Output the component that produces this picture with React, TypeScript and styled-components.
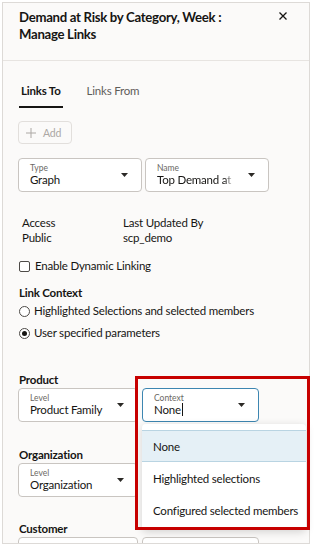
import React from "react";
import styled, { createGlobalStyle, css } from "styled-components";

const GlobalStyle = createGlobalStyle`
  *, *::before, *::after { box-sizing: border-box; }
  html, body { margin: 0; padding: 0; background: #ffffff; }
  body {
    font-family: Lato, "Liberation Sans", Arial, sans-serif;
    color: #161513;
    letter-spacing: -0.2px;
    overflow: hidden;
  }
  button { font-family: inherit; letter-spacing: inherit; }
`;

const Panel = styled.section`
  position: relative;
  margin: 2px 0 0 2px;
  width: 308px;
  height: 542px;
  border: 1px solid #dddad7;
  background: #fbfaf9;
  overflow-x: visible;
  overflow-y: clip;
`;

const Header = styled.header`
  display: flex;
  align-items: flex-start;
  gap: 12px;
  padding: 6px 18px 17px 16px;
  border-bottom: 1px solid #e7e4e1;
`;

const Title = styled.h1`
  flex: 1;
  margin: 0;
  font-size: 13.2px;
  line-height: 17px;
  font-weight: 700;
  letter-spacing: -0.3px;
  color: #161513;
`;

const CloseButton = styled.button`
  flex: none;
  width: 16px;
  height: 16px;
  margin-top: -1px;
  padding: 0;
  border: 0;
  background: none;
  display: flex;
  align-items: center;
  justify-content: center;
  color: #161513;
`;

const Content = styled.div`
  padding: 22px 15px 0;
`;

const TabList = styled.div`
  display: flex;
  gap: 22px;
  margin-left: 1px;
`;

const Tab = styled.button<{ $active?: boolean }>`
  padding: 0 2px 7px;
  border: 0;
  border-bottom: 2px solid ${(p) => (p.$active ? "#161513" : "transparent")};
  background: none;
  font-size: 11.5px;
  line-height: 16px;
  font-weight: ${(p) => (p.$active ? 700 : 400)};
  color: ${(p) => (p.$active ? "#161513" : "#5f5c59")};
`;

const AddButton = styled.button`
  margin-top: 13px;
  height: 23px;
  width: fit-content;
  display: flex;
  align-items: center;
  gap: 7px;
  padding: 0 10px 0 7px;
  border: 1px solid #e2dfdc;
  border-radius: 4px;
  background: transparent;
  color: #aca8a4;
  font-size: 10.5px;
`;

const FieldRow = styled.div<{ $gap: number; $top?: number }>`
  display: flex;
  gap: ${(p) => p.$gap}px;
  margin-top: ${(p) => p.$top ?? 0}px;
`;

const SelectBox = styled.div<{ $width: number; $focused?: boolean }>`
  position: relative;
  flex: none;
  width: ${(p) => p.$width}px;
  height: 34px;
  display: flex;
  align-items: flex-start;
  padding: 4px 13px 0 11px;
  border: 1px solid ${(p) => (p.$focused ? "#3d86b1" : "#c9c5c1")};
  border-radius: 4px;
  background: #ffffff;
`;

const SelectText = styled.div`
  flex: 1;
  min-width: 0;
  display: flex;
  flex-direction: column;
`;

const SelectLabel = styled.span`
  font-size: 8.5px;
  line-height: 10px;
  letter-spacing: 0;
  color: #6b6864;
`;

const SelectValue = styled.span<{ $fade?: boolean }>`
  font-size: 11.5px;
  line-height: 14px;
  white-space: nowrap;
  overflow: hidden;
  color: #161513;
  ${(p) =>
    p.$fade &&
    css`
      -webkit-mask-image: linear-gradient(to right, #000 88%, transparent);
      mask-image: linear-gradient(to right, #000 88%, transparent);
    `}
`;

const Cursor = styled.span`
  display: inline-block;
  width: 1px;
  height: 13px;
  margin-left: 1px;
  vertical-align: -2px;
  background: #161513;
`;

const CaretIcon = styled.svg`
  flex: none;
  margin: 10px 0 0 14px;
`;

const InfoGrid = styled.div`
  margin-top: 24px;
  padding-left: 4px;
  display: grid;
  grid-template-columns: 101px auto;
  font-size: 11.5px;
  line-height: 14.5px;
`;

const InfoItem = styled.div`
  display: flex;
  flex-direction: column;
`;

const CheckRow = styled.label`
  margin-top: 13px;
  padding-left: 1px;
  display: flex;
  align-items: center;
  gap: 5px;
  font-size: 11.5px;
  line-height: 16px;
`;

const CheckBox = styled.span`
  width: 11px;
  height: 11px;
  border: 1px solid #4d4a47;
  border-radius: 2px;
  background: #ffffff;
`;

const Section = styled.div<{ $top: number }>`
  margin-top: ${(p) => p.$top}px;
`;

const SectionLabel = styled.div`
  margin-bottom: 1px;
  padding-left: 1px;
  font-size: 11.5px;
  line-height: 14px;
  font-weight: 700;
`;

const RadioGroup = styled.div`
  margin-top: 3px;
  display: flex;
  flex-direction: column;
  gap: 6px;
`;

const RadioRow = styled.label`
  padding-left: 1px;
  display: flex;
  align-items: center;
  gap: 4px;
  font-size: 11.5px;
  line-height: 16px;
`;

const RadioCircle = styled.span<{ $checked?: boolean }>`
  width: 11px;
  height: 11px;
  border: 1px solid #4d4a47;
  border-radius: 50%;
  background: #ffffff;
  display: flex;
  align-items: center;
  justify-content: center;
  &::after {
    content: "";
    width: 5px;
    height: 5px;
    border-radius: 50%;
    background: ${(p) => (p.$checked ? "#161513" : "transparent")};
  }
`;

const Menu = styled.ul`
  position: absolute;
  top: 35px;
  left: -1px;
  z-index: 2;
  width: 164px;
  margin: 0;
  padding: 6px 0 4px;
  list-style: none;
  background: #ffffff;
  border-radius: 4px;
  box-shadow: 0 2px 8px rgba(0, 0, 0, 0.16);
`;

const MenuItem = styled.li<{ $highlighted?: boolean }>`
  height: 32px;
  display: flex;
  align-items: center;
  padding-left: 11px;
  font-size: 11.5px;
  white-space: nowrap;
  color: #161513;
  border-top: 1px solid ${(p) => (p.$highlighted ? "#b9d4e2" : "transparent")};
  border-bottom: 1px solid ${(p) => (p.$highlighted ? "#b9d4e2" : "transparent")};
  background: ${(p) => (p.$highlighted ? "#e5f0f6" : "transparent")};
`;

const Highlight = styled.div`
  position: absolute;
  top: -13px;
  left: -8px;
  z-index: 3;
  width: 175px;
  height: 154px;
  border: 3px solid #c70000;
  pointer-events: none;
`;

const Caret = () => (
  <CaretIcon width="7" height="4" viewBox="0 0 7 4" aria-hidden>
    <path d="M0 0h7L3.5 4z" fill="#2b2926" />
  </CaretIcon>
);

type SelectProps = {
  label: string;
  value: React.ReactNode;
  width: number;
  focused?: boolean;
  fade?: boolean;
  children?: React.ReactNode;
};

const Select = ({ label, value, width, focused, fade, children }: SelectProps) => (
  <SelectBox $width={width} $focused={focused}>
    <SelectText>
      <SelectLabel>{label}</SelectLabel>
      <SelectValue $fade={fade}>{value}</SelectValue>
    </SelectText>
    <Caret />
    {children}
  </SelectBox>
);

export default function App() {
  return (
    <>
      <GlobalStyle />
      <Panel>
        <Header>
          <Title>Demand at Risk by Category, Week : Manage Links</Title>
          <CloseButton aria-label="Close">
            <svg width="8" height="8" viewBox="0 0 8 8" aria-hidden>
              <path d="M0.5 0.5l7 7M7.5 0.5l-7 7" stroke="#161513" strokeWidth="1.3" />
            </svg>
          </CloseButton>
        </Header>
        <Content>
          <TabList>
            <Tab $active>Links To</Tab>
            <Tab>Links From</Tab>
          </TabList>
          <AddButton disabled>
            <svg width="10" height="10" viewBox="0 0 10 10" aria-hidden>
              <path d="M5 0v10M0 5h10" stroke="#aca8a4" strokeWidth="1" />
            </svg>
            Add
          </AddButton>
          <FieldRow $gap={3} $top={14}>
            <Select label="Type" value="Graph" width={124} />
            <Select label="Name" value="Top Demand at Risk" width={124} fade />
          </FieldRow>
          <InfoGrid>
            <InfoItem>
              <span>Access</span>
              <span>Public</span>
            </InfoItem>
            <InfoItem>
              <span>Last Updated By</span>
              <span>scp_demo</span>
            </InfoItem>
          </InfoGrid>
          <CheckRow>
            <CheckBox />
            Enable Dynamic Linking
          </CheckRow>
          <Section $top={12}>
            <SectionLabel>Link Context</SectionLabel>
            <RadioGroup>
              <RadioRow>
                <RadioCircle />
                Highlighted Selections and selected members
              </RadioRow>
              <RadioRow>
                <RadioCircle $checked />
                User specified parameters
              </RadioRow>
            </RadioGroup>
          </Section>
          <Section $top={32}>
            <SectionLabel>Product</SectionLabel>
            <FieldRow $gap={4}>
              <Select label="Level" value="Product Family" width={120} />
              <Select
                label="Context"
                value={
                  <>
                    None
                    <Cursor />
                  </>
                }
                width={117}
                focused
              >
                <Menu role="listbox">
                  <MenuItem $highlighted>None</MenuItem>
                  <MenuItem>Highlighted selections</MenuItem>
                  <MenuItem>Configured selected members</MenuItem>
                </Menu>
                <Highlight />
              </Select>
            </FieldRow>
          </Section>
          <Section $top={26}>
            <SectionLabel>Organization</SectionLabel>
            <FieldRow $gap={4}>
              <Select label="Level" value="Organization" width={120} />
              <Select label="Context" value="None" width={117} />
            </FieldRow>
          </Section>
          <Section $top={25}>
            <SectionLabel>Customer</SectionLabel>
            <FieldRow $gap={4}>
              <Select label="Level" value="Customer" width={120} />
              <Select label="Context" value="None" width={117} />
            </FieldRow>
          </Section>
        </Content>
      </Panel>
    </>
  );
}
